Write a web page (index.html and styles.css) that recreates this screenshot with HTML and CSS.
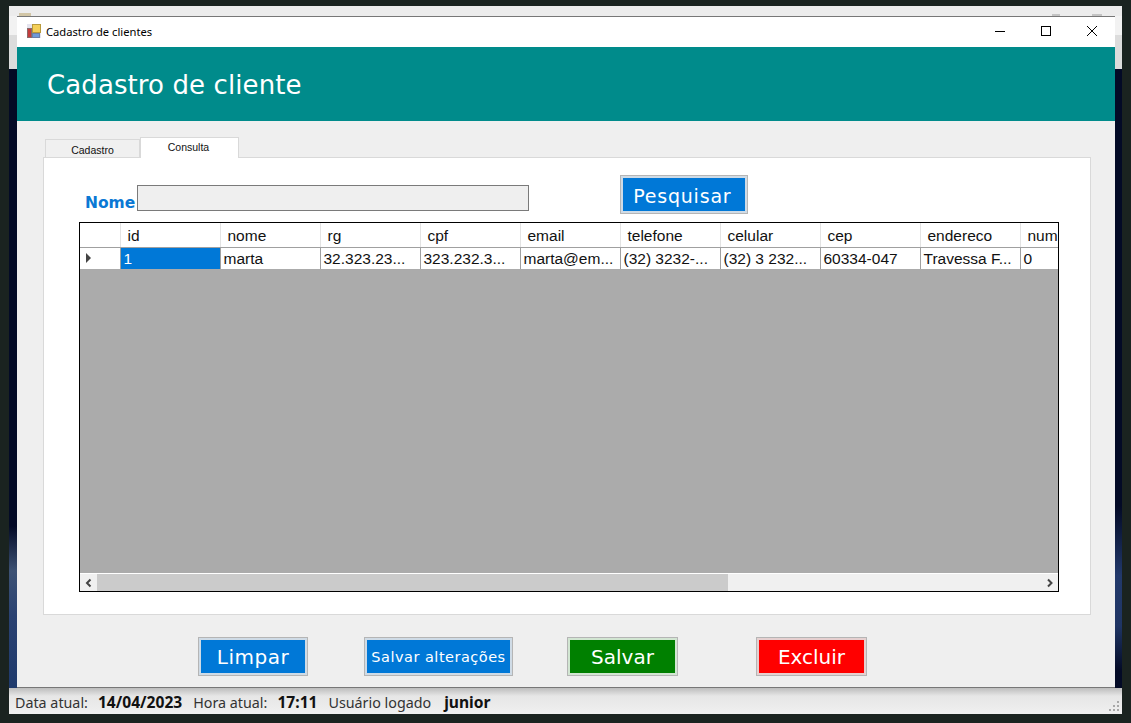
FILE: index.html
```html
<!DOCTYPE html>
<html lang="en">
  <head>
    <meta charset="UTF-8" />
    <title>Cadastro de clientes</title>
    <link rel="stylesheet" href="styles.css">
  </head>
  <body>
    <div class="back-window">
      <!-- Main window title, mostly hidden behind the form -->
      <div class="back-bar">
        <span class="back-icon"></span>
        <span class="back-control back-control-min"></span>
        <span class="back-control back-control-close"></span>
      </div>

      <!-- Cadastro de clientes window -->
      <div class="window">
        <div class="titlebar">
          <div class="title">
            <svg class="app-icon" width="14" height="14" viewBox="0 0 14 14">
              <rect x="0" y="0" width="14" height="14" fill="#e4e4ee" />
              <rect x="0.5" y="4.5" width="4" height="9" fill="#c43c3c" stroke="#8a6a6a" />
              <rect x="5.5" y="0.5" width="8" height="8" fill="#f4cf58" stroke="#b89a3c" />
              <rect x="5.5" y="9.5" width="7" height="4" fill="#6f9ad8" stroke="#6a7fa8" />
            </svg>
            <span>Cadastro de clientes</span>
          </div>
          <div class="controls">
            <svg width="12" height="12" viewBox="0 0 12 12"><path d="M1 6.5h10" stroke="#000" fill="none" /></svg>
            <svg width="12" height="12" viewBox="0 0 12 12"><rect x="1.5" y="1.5" width="9" height="9" stroke="#000" fill="none" /></svg>
            <svg width="12" height="12" viewBox="0 0 12 12"><path d="M1 1l10 10M11 1L1 11" stroke="#000" fill="none" /></svg>
          </div>
        </div>

        <div class="header">
          <h1>Cadastro de cliente</h1>
        </div>

        <div class="content">
          <div class="tabs">
            <div class="tab">Cadastro</div>
            <div class="tab tab-active">Consulta</div>
          </div>

          <div class="tab-page">
            <div class="search-row">
              <label class="search-label" for="nome">Nome</label>
              <input class="search-input" id="nome" type="text" />
              <button class="btn btn-blue btn-search" type="button">Pesquisar</button>
            </div>

            <!-- Grid -->
            <div class="grid">
              <div class="grid-clip">
                <table class="grid-table">
                  <thead>
                    <tr>
                      <th class="row-head"></th>
                      <th>id</th>
                      <th>nome</th>
                      <th>rg</th>
                      <th>cpf</th>
                      <th>email</th>
                      <th>telefone</th>
                      <th>celular</th>
                      <th>cep</th>
                      <th>endereco</th>
                      <th>num</th>
                    </tr>
                  </thead>
                  <tbody>
                    <tr>
                      <td class="row-head"><span class="row-arrow"></span></td>
                      <td class="cell-selected">1</td>
                      <td>marta</td>
                      <td>32.323.23...</td>
                      <td>323.232.3...</td>
                      <td>marta@em...</td>
                      <td>(32) 3232-...</td>
                      <td>(32) 3 232...</td>
                      <td>60334-047</td>
                      <td>Travessa F...</td>
                      <td>0</td>
                    </tr>
                  </tbody>
                </table>
              </div>
              <div class="scrollbar">
                <svg class="scroll-arrow" width="17" height="16" viewBox="0 0 16 16"><path d="M10 4.5L6.5 8l3.5 3.5" stroke="#444" stroke-width="2" fill="none" /></svg>
                <div class="scroll-track"><div class="scroll-thumb"></div></div>
                <svg class="scroll-arrow" width="16" height="16" viewBox="0 0 16 16"><path d="M6 4.5L9.5 8 6 11.5" stroke="#444" stroke-width="2" fill="none" /></svg>
              </div>
            </div>
          </div>

          <div class="actions">
            <button class="btn btn-blue btn-limpar" type="button">Limpar</button>
            <button class="btn btn-blue btn-alterar" type="button">Salvar alterações</button>
            <button class="btn btn-green btn-salvar" type="button">Salvar</button>
            <button class="btn btn-red btn-excluir" type="button">Excluir</button>
          </div>
        </div>
      </div>

      <!-- Status bar of the main window -->
      <div class="statusbar">
        <span class="status-label">Data atual:</span>
        <strong class="status-value">14/04/2023</strong>
        <span class="status-label">Hora atual:</span>
        <strong class="status-value">17:11</strong>
        <span class="status-label status-label-user">Usuário logado</span>
        <strong class="status-value">junior</strong>
        <svg class="grip" width="11" height="11" viewBox="0 0 11 11" fill="#a8a8a8">
          <rect x="8" y="0" width="2" height="2" />
          <rect x="4" y="4" width="2" height="2" />
          <rect x="8" y="4" width="2" height="2" />
          <rect x="0" y="8" width="2" height="2" />
          <rect x="4" y="8" width="2" height="2" />
          <rect x="8" y="8" width="2" height="2" />
        </svg>
      </div>
    </div>
  </body>
</html>
```

FILE: styles.css
```css
html,
body {
  height: 100%;
}

body {
  margin: 0;
  background-color: #1a2320;
  overflow: hidden;
  font-family: "DejaVu Sans", sans-serif;
}

.back-window {
  margin: 6px 9px 0;
  height: 708px;
  display: flex;
  flex-direction: column;
  background:
    linear-gradient(to bottom, #f2f2f2 0, #f2f2f2 29px, #dcdcdc 29px, #dcdcdc 63px, #030a26 63px, #030a26 520px, #3d5274 565px, #2a4272 610px, #1f3a6c 682px) left top / 50% 100% no-repeat,
    linear-gradient(to bottom, #f2f2f2 0, #f2f2f2 29px, #dcdcdc 29px, #dcdcdc 63px, #030a26 63px, #030a26 500px, #22396b 570px, #1f3564 620px, #030a26 665px) right top / 50% 100% no-repeat;
}

.back-bar {
  height: 10px;
  flex: none;
  background-color: #ececec;
  position: relative;
}

.back-icon {
  position: absolute;
  left: 10px;
  top: 7px;
  width: 12px;
  height: 3px;
  background-color: #d2c6a6;
}

.back-control {
  position: absolute;
  top: 8px;
  height: 2px;
  background-color: #c4c4c4;
}

.back-control-min {
  left: 1043px;
  width: 8px;
}

.back-control-close {
  left: 1083px;
  width: 10px;
}

.window {
  width: 1098px;
  height: 672px;
  flex: none;
  margin-left: 8px;
  background-color: #efefef;
  box-sizing: border-box;
  border-top: 1px solid #777;
  border-bottom: 1px solid #777;
}

.titlebar {
  height: 30px;
  padding-bottom: 2px;
  box-sizing: border-box;
  background-color: #fff;
  display: flex;
  justify-content: space-between;
  align-items: center;
}

.title {
  display: flex;
  align-items: center;
  padding-left: 10px;
  gap: 5px;
  font-family: "Noto Sans", sans-serif;
  font-size: 11.2px;
  color: #000;
}

.controls {
  display: flex;
  gap: 34px;
  padding-right: 17px;
}

.header {
  height: 74px;
  padding-top: 2px;
  box-sizing: border-box;
  background-color: #008b8b;
  display: flex;
  align-items: center;
}

h1 {
  margin: 0 0 0 30px;
  font-size: 26px;
  font-weight: normal;
  color: #fff;
  letter-spacing: 0.1px;
}

.content {
  padding: 16px 24px 0 26px;
}

.tabs {
  display: flex;
  align-items: flex-end;
  height: 20px;
  margin-left: 2px;
  font-family: "Liberation Sans", sans-serif;
  font-size: 10.5px;
  color: #111;
}

.tab {
  width: 95px;
  height: 18px;
  line-height: 20px;
  text-align: center;
  background-color: #f0f0f0;
  border: 1px solid #d9d9d9;
  border-bottom: none;
  box-sizing: border-box;
}

.tab-active {
  width: 99px;
  height: 21px;
  padding-right: 2px;
  line-height: 18px;
  background-color: #fff;
  margin-bottom: -1px;
  position: relative;
}

.tab-page {
  height: 458px;
  background-color: #fff;
  border: 1px solid #d9d9d9;
  box-sizing: border-box;
  padding: 17px 31px 0 35px;
}

.search-row {
  display: flex;
  align-items: flex-start;
  height: 47px;
}

.search-label {
  margin: 20px 2px 0 6px;
  font-size: 15.5px;
  font-weight: bold;
  color: #0a78d4;
  line-height: 17px;
}

.search-input {
  width: 392px;
  height: 26px;
  margin: 10px 0 0;
  padding: 0;
  background-color: #efefef;
  border: 1px solid #7a7a7a;
  box-sizing: border-box;
}

.btn {
  padding: 0;
  color: #fff;
  font-family: "DejaVu Sans", sans-serif;
  border: 2px solid #fff;
  outline: 1px solid #b5b5b5;
  outline-offset: 0;
  box-sizing: border-box;
  height: 37px;
  letter-spacing: 0.5px;
}

.btn-blue {
  background-color: #0078d7;
  border-color: #cfdbe6;
}

.btn-green {
  background-color: #008000;
  border-color: #d2e6d2;
  letter-spacing: 0;
}

.btn-red {
  background-color: #ff0000;
  border-color: #e6d0d0;
}

.btn-search {
  width: 126px;
  margin: 1px 0 0 92px;
  padding: 2px 4px 0 0;
  font-size: 19px;
  letter-spacing: 0.8px;
}

.grid {
  height: 370px;
  border: 1px solid #000;
  box-sizing: border-box;
  background-color: #ababab;
  display: flex;
  flex-direction: column;
  justify-content: space-between;
}

.grid-clip {
  overflow: hidden;
}

.grid-table {
  border-collapse: collapse;
  table-layout: fixed;
  width: 1040px;
  font-family: "Liberation Sans", sans-serif;
  font-size: 15.5px;
  color: #111;
}

.grid-table th,
.grid-table td {
  width: 100px;
  box-sizing: border-box;
  padding: 2px 0 0 3px;
  text-align: left;
  font-weight: normal;
  background-color: #fff;
  border-right: 1px solid #a0a0a0;
  border-bottom: 1px solid #a0a0a0;
  white-space: nowrap;
  overflow: hidden;
}

.grid-table th {
  height: 24px;
  padding-left: 7px;
  border-right-color: #e3e3e3;
}

.grid-table td {
  height: 22px;
  border-bottom: none;
}

.grid-table .row-head {
  width: 40px;
  padding: 0 0 0 6px;
}

.row-arrow {
  display: block;
  width: 0;
  height: 0;
  border-left: 5px solid #444;
  border-top: 5px solid transparent;
  border-bottom: 5px solid transparent;
}

.grid-table .cell-selected {
  background-color: #0078d7;
  color: #fff;
}

.scrollbar {
  height: 17px;
  display: flex;
  align-items: center;
  background-color: #f0f0f0;
  border-top: 1px solid #fff;
}

.scroll-arrow {
  flex: none;
}

.scroll-track {
  flex: 1;
  height: 100%;
}

.scroll-thumb {
  width: 631px;
  height: 100%;
  background-color: #cbcbcb;
}

.actions {
  display: flex;
  align-items: flex-start;
  padding: 23px 0 0 156px;
}

.btn-limpar {
  width: 108px;
  font-size: 20px;
}

.btn-alterar {
  width: 147px;
  margin-left: 58px;
  font-size: 14.5px;
}

.btn-salvar {
  width: 109px;
  margin-left: 56px;
  font-size: 20px;
}

.btn-excluir {
  width: 109px;
  margin-left: 80px;
  font-size: 20px;
  letter-spacing: 0;
}

.statusbar {
  flex: 1;
  display: flex;
  align-items: center;
  padding-left: 6px;
  padding-top: 2px;
  font-size: 14.3px;
  color: #222;
  background: linear-gradient(to bottom, #bdbdbd 0, #e6e6e6 8px, #f0f0f0 100%);
}

.status-label {
  font-family: "Noto Sans", sans-serif;
  margin-right: 10px;
  color: #333;
}

.status-label-user {
  margin-right: 13px;
}

.status-value {
  font-family: "Noto Sans", sans-serif;
  font-size: 15.6px;
  margin-right: 11px;
  color: #111;
}

.grip {
  margin: auto 2px 2px auto;
}
```
